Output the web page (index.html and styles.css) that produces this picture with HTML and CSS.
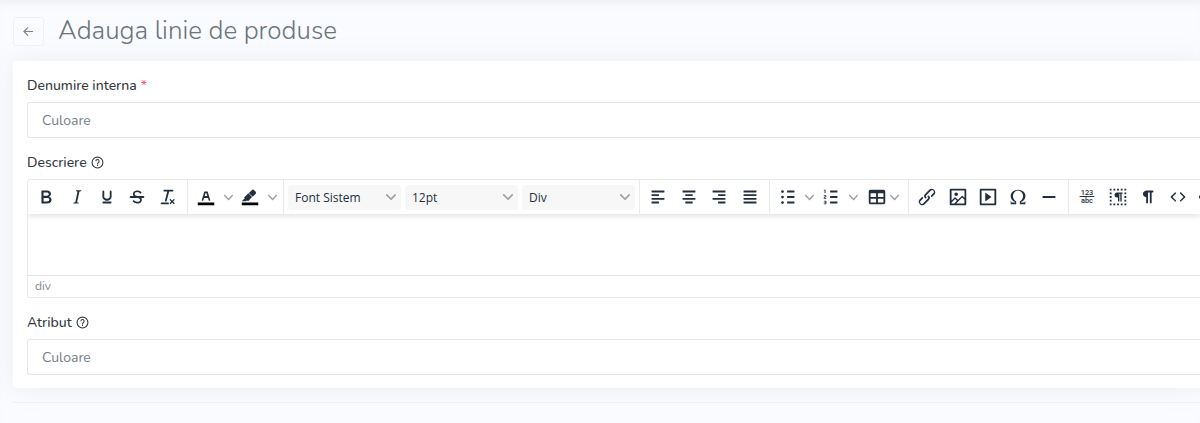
FILE: index.html
```html
<!DOCTYPE html>
<html lang="ro">
<head>
    <meta charset="UTF-8">
    <meta name="viewport" content="width=device-width, initial-scale=1.0">
    <title>Adauga linie de produse</title>
    <link rel="stylesheet" href="styles.css">
</head>
<body>
    <svg class="defs" aria-hidden="true">
        <symbol id="chevron" viewBox="0 0 10 10"><path d="M8.7 2.2c.3-.3.8-.3 1 0 .4.4.4.9 0 1.2L5.7 7.8c-.3.3-.9.3-1.2 0L.2 3.4a.8.8 0 0 1 0-1.2c.3-.3.8-.3 1.1 0L5 6l3.7-3.8Z"/></symbol>
        <symbol id="help" viewBox="0 0 24 24"><path d="M12 1a11 11 0 1 0 0 22 11 11 0 0 0 0-22Zm0 20a9 9 0 1 1 0-18 9 9 0 0 1 0 18ZM11 16h2v2.500h-2zM12 5.500a4 4 0 0 0-4 4h2a2 2 0 1 1 4 0c0 2-3 2-3 5.500h2c0-2.500 3-3 3-5.500a4 4 0 0 0-4-4Z"/></symbol>
    </svg>

    <main class="page">
        <header class="page-header">
            <button type="button" class="back-btn" aria-label="Inapoi">
                <svg viewBox="0 0 12 12"><path d="M11 6H1.500M5.500 1.500 1 6l4.500 4.500"/></svg>
            </button>
            <h1>Adauga linie de produse</h1>
        </header>

        <form class="card">
            <div class="field">
                <label for="name">Denumire interna <span class="required">*</span></label>
                <input type="text" id="name" class="form-control" placeholder="Culoare">
            </div>

            <div class="field">
                <label for="description">Descriere <svg class="help"><use href="#help"/></svg></label>
                <div class="editor">
                    <div class="toolbar">
                        <div class="group group-five">
                            <button type="button" aria-label="Bold"><svg viewBox="0 0 24 24"><path d="M7.8 19c-.3 0-.5 0-.6-.2l-.2-.5V5.700c0-.2 0-.4.2-.5l.6-.2h5c1.500 0 2.700.3 3.500 1 .7.6 1.100 1.400 1.100 2.500a3 3 0 0 1-.6 1.900c-.4.6-1 1-1.600 1.200.4.1.9.3 1.300.6s.8.7 1 1.200c.4.4.5 1 .5 1.600 0 1.300-.4 2.300-1.300 3-.8.7-2.100 1-3.800 1H7.800Zm5-8.300c.6 0 1.200-.1 1.600-.5.4-.3.6-.7.6-1.300 0-1.100-.8-1.700-2.300-1.700H9.300v3.500h3.400Zm.5 6c.7 0 1.300-.1 1.700-.4.4-.4.6-.9.6-1.500s-.2-1-.7-1.400c-.4-.3-1-.4-2-.4H9.400v3.800h4Z"/></svg></button>
                            <button type="button" aria-label="Italic"><svg viewBox="0 0 24 24"><path d="m16.700 4.700-.1.9h-.3c-.6 0-1 0-1.400.3-.3.3-.4.6-.5 1.100l-2.100 9.800v.6c0 .5.4.8 1.400.8h.2l-.2.8H8l.2-.8h.2c1.100 0 1.800-.5 2-1.500l2-9.800.1-.5c0-.6-.4-.8-1.400-.8h-.3l.2-.9h5.700Z"/></svg></button>
                            <button type="button" aria-label="Subliniat"><svg viewBox="0 0 24 24"><path d="M16 5c.6 0 1 .4 1 1v5.500a4 4 0 0 1-.4 1.800l-1 1.400a5.300 5.300 0 0 1-5.500 1 5 5 0 0 1-1.600-1c-.5-.4-.8-.9-1.100-1.400a4 4 0 0 1-.4-1.800V6c0-.6.4-1 1-1s1 .4 1 1v5.500c0 .3 0 .6.2 1l.6.7a3.300 3.300 0 0 0 2.200.8 3.400 3.400 0 0 0 2.200-.8c.3-.2.4-.5.6-.8l.2-.9V6c0-.6.4-1 1-1ZM8 17h8c.6 0 1 .4 1 1s-.4 1-1 1H8a1 1 0 0 1 0-2Z"/></svg></button>
                            <button type="button" aria-label="Taiat"><svg viewBox="0 0 24 24"><path d="M15.600 8.500c-.5-.7-1-1.100-1.300-1.300-.6-.4-1.300-.6-2-.6-2.700 0-2.800 1.700-2.800 2.100 0 1.600 1.800 2 3.200 2.300 4.400.9 4.600 2.800 4.600 3.900 0 1.400-.7 4.100-5 4.100A6.200 6.200 0 0 1 7 16.400l1.500-1.100c.4.6 1.600 2 3.700 2 1.600 0 2.500-.4 3-1.200.4-.8.3-2-.8-2.600-.7-.4-1.600-.7-2.900-1-1-.2-3.900-.8-3.900-3.600C7.600 6 10.300 5 12.400 5c2.900 0 4.200 1.600 4.700 2.400l-1.500 1.100Z"/><path d="M5 11h14a1 1 0 0 1 0 2H5a1 1 0 0 1 0-2Z"/></svg></button>
                            <button type="button" aria-label="Sterge formatarea"><svg viewBox="0 0 24 24"><path d="M13.200 6a1 1 0 0 1 0 .2l-2.600 10a1 1 0 0 1-1 .8h-.2a.8.8 0 0 1-.8-1l2.600-10H8a1 1 0 1 1 0-2h9a1 1 0 0 1 0 2h-3.800ZM5 18h7a1 1 0 0 1 0 2H5a1 1 0 0 1 0-2Zm13 1.500L16.500 18 15 19.500a.7.7 0 0 1-1-1l1.500-1.500-1.500-1.500a.7.7 0 0 1 1-1l1.500 1.500 1.500-1.500a.7.7 0 0 1 1 1L17.500 17l1.500 1.500a.7.7 0 0 1-1 1Z"/></svg></button>
                        </div>
                        <div class="group">
                            <button type="button" aria-label="Culoare text"><svg viewBox="0 0 24 24"><path class="swatch" d="M3 18h18v3H3z"/><path d="M8.700 16h-.8a.5.5 0 0 1-.5-.6l2.700-9c.1-.3.3-.4.5-.4h2.800c.2 0 .4.1.5.4l2.700 9a.5.5 0 0 1-.5.6h-.8a.5.5 0 0 1-.4-.4l-.7-2.200c0-.3-.3-.4-.5-.4h-3.400c-.2 0-.4.1-.5.4l-.7 2.200c0 .3-.2.4-.4.4Zm2.600-7.600-.6 2a.5.5 0 0 0 .5.6h1.600a.5.5 0 0 0 .5-.6l-.6-2c0-.3-.3-.4-.5-.4h-.4c-.2 0-.4.1-.5.4Z"/></svg></button>
                            <button type="button" class="arrow" aria-label="Alege culoare text"><svg><use href="#chevron"/></svg></button>
                            <button type="button" aria-label="Culoare fundal"><svg viewBox="0 0 24 24"><path class="swatch" d="M3 18h18v3H3z"/><path d="M7.700 16.700H3l3.300-3.300-.7-.8L10.200 8l4 4.100-4 4.200c-.2.2-.6.2-.8 0l-.6-.7-1.100 1.100ZM12.200 9.200 10.800 7.600l3.200-3.100a2 2 0 0 1 2.600 0L18 6c.7.7.7 2 0 2.700l-3 3-1.400-1.400-.8-.6Z"/></svg></button>
                            <button type="button" class="arrow" aria-label="Alege culoare fundal"><svg><use href="#chevron"/></svg></button>
                        </div>
                        <div class="group group-selects">
                            <div class="select"><select aria-label="Font"><option>Font Sistem</option></select><svg><use href="#chevron"/></svg></div>
                            <div class="select"><select aria-label="Dimensiune font"><option>12pt</option></select><svg><use href="#chevron"/></svg></div>
                            <div class="select"><select aria-label="Bloc"><option>Div</option></select><svg><use href="#chevron"/></svg></div>
                        </div>
                        <div class="group group-four">
                            <button type="button" aria-label="Aliniere stanga"><svg viewBox="0 0 24 24"><path class="line" d="M5 6h14M5 10h8M5 14h14M5 18h8"/></svg></button>
                            <button type="button" aria-label="Centrare"><svg viewBox="0 0 24 24"><path class="line" d="M5 6h14M8 10h8M5 14h14M8 18h8"/></svg></button>
                            <button type="button" aria-label="Aliniere dreapta"><svg viewBox="0 0 24 24"><path class="line" d="M5 6h14M11 10h8M5 14h14M11 18h8"/></svg></button>
                            <button type="button" aria-label="Justificare"><svg viewBox="0 0 24 24"><path class="line" d="M5 6h14M5 10h14M5 14h14M5 18h14"/></svg></button>
                        </div>
                        <div class="group group-lists">
                            <button type="button" aria-label="Lista cu puncte"><svg viewBox="0 0 24 24"><path class="line" d="M11 6h8M11 12h8M11 18h8"/><circle cx="6" cy="6" r="1.500"/><circle cx="6" cy="12" r="1.500"/><circle cx="6" cy="18" r="1.500"/></svg></button>
                            <button type="button" class="arrow" aria-label="Tip lista cu puncte"><svg><use href="#chevron"/></svg></button>
                            <button type="button" aria-label="Lista numerotata"><svg viewBox="0 0 24 24"><path class="line" d="M11 6h8M11 12h8M11 18h8"/><path d="M6 4v3.500c0 .3-.2.5-.5.5a.5.5 0 0 1-.5-.5V5h-.5a.5.5 0 0 1 0-1H6Zm-1 8.800.2.2h1.300c.3 0 .5.2.5.5s-.2.5-.5.5H4.900a1 1 0 0 1-.9-1V13c0-.4.3-.8.6-1l1.200-.4.2-.3a.2.2 0 0 0-.2-.2H4.500a.5.5 0 0 1-.5-.5c0-.3.2-.5.5-.5h1.600c.5 0 .9.4.9 1v.1c0 .4-.3.8-.6 1l-1.200.4-.2.3ZM7 17v2c0 .6-.4 1-1 1H4.500a.5.5 0 0 1 0-1h1.200c.2 0 .3-.1.3-.3 0-.2-.1-.3-.3-.3H4.400a.4.4 0 1 1 0-.8h1.300c.2 0 .3-.1.3-.3 0-.2-.1-.3-.3-.3H4.500a.5.5 0 1 1 0-1H6c.6 0 1 .4 1 1Z"/></svg></button>
                            <button type="button" class="arrow" aria-label="Tip lista numerotata"><svg><use href="#chevron"/></svg></button>
                            <button type="button" class="menu-btn" aria-label="Tabel"><svg viewBox="0 0 24 24"><path d="M19 4a2 2 0 0 1 2 2v12a2 2 0 0 1-2 2H5a2 2 0 0 1-2-2V6c0-1.100.9-2 2-2h14ZM5 14v4h6v-4H5Zm14 0h-6v4h6v-4Zm0-6h-6v4h6V8ZM5 12h6V8H5v4Z"/></svg><svg class="chevron"><use href="#chevron"/></svg></button>
                        </div>
                        <div class="group group-five">
                            <button type="button" aria-label="Link"><svg viewBox="0 0 24 24"><path d="M6.200 12.300a1 1 0 0 1 1.400 1.400l-2 2a2 2 0 1 0 2.600 2.800l4.800-4.800a1 1 0 0 0 0-1.400 1 1 0 1 1 1.400-1.300 2.900 2.900 0 0 1 0 4L9.600 20a3.900 3.900 0 0 1-5.500-5.500l2-2Zm11.600-.6a1 1 0 0 1-1.400-1.400l2-2a2 2 0 1 0-2.600-2.800L11 10.300a1 1 0 0 0 0 1.400A1 1 0 1 1 9.600 13a2.900 2.900 0 0 1 0-4L14.400 4a3.900 3.900 0 0 1 5.500 5.500l-2 2Z"/></svg></button>
                            <button type="button" aria-label="Imagine"><svg viewBox="0 0 24 24"><path fill-rule="evenodd" d="m5 15.700 3.300-3.200c.3-.3.7-.3 1 0L12 15l4.100-4c.3-.4.8-.4 1 0l2 1.900V5H5v10.700ZM5 18V19h3l2.800-2.900-2-2L5 17.900Zm14-3-2.500-2.400-6.400 6.500H19v-4ZM4 3h16c.6 0 1 .4 1 1v16c0 .6-.4 1-1 1H4a1 1 0 0 1-1-1V4c0-.6.4-1 1-1Zm6 8a2 2 0 1 0 0-4 2 2 0 0 0 0 4Z"/></svg></button>
                            <button type="button" aria-label="Media"><svg viewBox="0 0 24 24"><path fill-rule="evenodd" d="M4 3h16c.6 0 1 .4 1 1v16c0 .6-.4 1-1 1H4a1 1 0 0 1-1-1V4c0-.6.4-1 1-1Zm1 2v14h14V5H5Zm4.800 2.600 5.600 4a.5.5 0 0 1 0 .8l-5.600 4A.5.5 0 0 1 9 16V8a.5.5 0 0 1 .8-.4Z"/></svg></button>
                            <button type="button" aria-label="Caracter special"><svg viewBox="0 0 24 24"><path d="M15 18h4l1-2v4h-6v-3.300l1.400-1a6 6 0 0 0 1.800-2.900 6.300 6.300 0 0 0-.1-4.100 5.800 5.800 0 0 0-3-3.200c-.6-.3-1.300-.5-2.100-.5a5.100 5.100 0 0 0-3.900 1.800 6.300 6.300 0 0 0-1.300 6 6.200 6.200 0 0 0 1.800 3l1.400.9V20H4v-4l1 2h4v-.5l-2-1L5.400 15A6.500 6.500 0 0 1 4 11c0-1 .2-1.900.6-2.700A7 7 0 0 1 6.300 6C7.100 5.400 8 5 9 4.500c1-.3 2-.5 3.100-.5a8.800 8.800 0 0 1 5.700 2 7 7 0 0 1 1.700 2.300 6 6 0 0 1 .2 4.800c-.2.7-.6 1.300-1 1.900a7.600 7.600 0 0 1-3.600 2.500v.5Z"/></svg></button>
                            <button type="button" aria-label="Linie orizontala"><svg viewBox="0 0 24 24"><path class="line" d="M5 12h14"/></svg></button>
                        </div>
                        <div class="group group-five">
                            <button type="button" aria-label="Numar cuvinte"><svg viewBox="0 0 24 24"><path d="M4 11h16v1H4z"/><text x="12" y="10" class="count">123</text><text x="12" y="19" class="count">abc</text></svg></button>
                            <button type="button" aria-label="Arata blocuri"><svg viewBox="0 0 24 24"><path class="dots" d="M3 4h18M3 20h18M4 7v10M20 7v10"/><path d="M11 7h6v1.500h-1V17h-1.500V8.500h-1V17H12v-4.500h-1a2.700 2.700 0 0 1 0-5.500Z"/></svg></button>
                            <button type="button" aria-label="Caractere invizibile"><svg viewBox="0 0 24 24"><path d="M10 5h7a1 1 0 0 1 0 2h-1v11a1 1 0 0 1-2 0V7h-2v11a1 1 0 0 1-2 0v-6c-.5 0-1 0-1.400-.3A3.400 3.400 0 0 1 6.800 10a3.300 3.300 0 0 1 0-2.800 3.400 3.400 0 0 1 1.800-1.800L10 5Z"/></svg></button>
                            <button type="button" aria-label="Cod sursa"><svg viewBox="0 0 24 24"><path d="M9.800 15.700c.3.3.3.8 0 1-.3.4-.9.4-1.200 0l-4.400-4.100a.8.8 0 0 1 0-1.200l4.400-4.200c.3-.3.9-.3 1.200 0 .3.3.3.8 0 1.100L6 12l3.800 3.700ZM14.200 15.700c-.3.3-.3.8 0 1 .4.4.9.4 1.200 0l4.400-4.100c.3-.3.3-.9 0-1.200l-4.400-4.200a.8.8 0 0 0-1.200 0c-.3.3-.3.8 0 1.100L18 12l-3.800 3.700Z"/></svg></button>
                            <button type="button" aria-label="Mai mult"><svg viewBox="0 0 24 24"><circle cx="3" cy="12" r="2"/><circle cx="12" cy="12" r="2"/><circle cx="21" cy="12" r="2"/></svg></button>
                        </div>
                    </div>
                    <textarea id="description"></textarea>
                    <div class="statusbar">div</div>
                </div>
            </div>

            <div class="field">
                <label for="attribute">Atribut <svg class="help"><use href="#help"/></svg></label>
                <input type="text" id="attribute" class="form-control" placeholder="Culoare">
            </div>
        </form>

        <hr>
    </main>
</body>
</html>
```

FILE: styles.css
```css
* {
    box-sizing: border-box;
}
body {
    margin: 0;
    background-color: #fafbfe;
    color: #343a40;
    font-family: Nunito, Lato, sans-serif;
    font-size: 14px;
    overflow-x: hidden;
}
button,
input,
select,
textarea {
    font-family: inherit;
    margin: 0;
}
.defs {
    position: absolute;
    width: 0;
    height: 0;
}
.page {
    padding: 16px 0 20px 13px;
    box-shadow: inset 0 1px 0 #eff1f2, inset 0 8px 12px -8px rgba(154, 161, 171, 0.2);
}
.page-header {
    display: flex;
    align-items: center;
    gap: 14px;
    height: 30px;
    margin-bottom: 15px;
}
.back-btn {
    display: flex;
    align-items: center;
    justify-content: center;
    width: 31px;
    height: 29px;
    padding: 0;
    border: 1px solid #eef0f4;
    border-radius: 3px;
    background-color: #fafbfe;
}
.back-btn svg {
    width: 11px;
    height: 11px;
    fill: none;
    stroke: #7b8290;
    stroke-width: 1.3;
}
h1 {
    margin: 0;
    color: #6c757d;
    font-size: 26px;
    font-weight: 300;
    line-height: 30px;
}
.card {
    display: flex;
    flex-direction: column;
    gap: 15px;
    padding: 15px 0 13px 14px;
    border-radius: 4px 0 0 4px;
    background-color: #fff;
    box-shadow: 0 0 24px rgba(154, 161, 171, 0.15);
}
.field label {
    display: flex;
    align-items: center;
    gap: 4px;
    height: 18px;
    margin-bottom: 8px;
    font-size: 14px;
    font-weight: 500;
}
.required {
    color: #fa5c7c;
}
.help {
    width: 13px;
    height: 13px;
    fill: #343a40;
}
.form-control {
    display: block;
    width: 100%;
    height: 36px;
    padding: 0 14px;
    border: 1px solid #e3e7e9;
    border-right: 0;
    border-radius: 3px 0 0 3px;
    background-color: #fff;
    font-size: 14px;
}
.form-control::placeholder {
    color: #75808a;
    opacity: 1;
}
.editor {
    border: 1px solid #e6e8e9;
    border-right: 0;
    border-radius: 3px 0 0 3px;
    overflow: hidden;
}
.toolbar {
    position: relative;
    display: flex;
    height: 34px;
    box-shadow: 0 2px 6px rgba(0, 0, 0, 0.12);
}
.group {
    display: flex;
    flex: none;
    align-items: center;
    width: 96px;
    padding: 0 4px 0 3px;
    border-right: 1px solid #e8eaec;
}
.group-five {
    width: 160px;
}
.group-four {
    width: 130px;
}
.group-selects {
    gap: 4px;
    width: 356px;
    padding: 0 4px;
}
.group-lists {
    width: 139px;
}
.group button {
    display: flex;
    flex: 1;
    align-items: center;
    justify-content: center;
    height: 28px;
    padding: 0;
    border: 0;
    background: none;
}
.group .arrow {
    flex: none;
    width: 14px;
}
.group svg {
    flex: none;
    width: 22px;
    height: 22px;
    fill: #222f3e;
}
.group .arrow svg,
.group .chevron,
.select svg {
    width: 9px;
    height: 9px;
    fill: #9a9fa6;
}
.group .menu-btn {
    flex: 0 0 44px;
    gap: 2px;
}
.group .swatch {
    fill: #000;
}
.line {
    stroke: #222f3e;
    stroke-width: 2;
}
.dots {
    fill: none;
    stroke: #222f3e;
    stroke-width: 2;
    stroke-dasharray: 2 2;
}
.count {
    font-family: Roboto, sans-serif;
    font-size: 8px;
    font-weight: 500;
    text-anchor: middle;
}
.select {
    display: flex;
    flex: 1;
    align-items: center;
    height: 25px;
    padding-right: 5px;
    border-radius: 3px;
    background-color: #f7f7f7;
}
.select select {
    flex: 1;
    min-width: 0;
    height: 25px;
    padding: 0 7px;
    border: 0;
    background: none;
    color: #222f3e;
    font-family: "Segoe UI", "Open Sans", sans-serif;
    font-size: 12px;
    appearance: none;
}
.group .select svg {
    width: 10px;
    height: 10px;
    fill: #9a9fa6;
}
textarea {
    display: block;
    width: 100%;
    height: 61px;
    padding: 8px;
    border: 0;
    background: none;
    resize: none;
}
.statusbar {
    height: 22px;
    padding-left: 7px;
    border-top: 1px solid #e3e5e7;
    color: #7f8990;
    font-size: 12px;
    line-height: 21px;
}
hr {
    margin: 14px 0 0;
    border: 0;
    border-top: 1px solid #eef0f4;
}
```
